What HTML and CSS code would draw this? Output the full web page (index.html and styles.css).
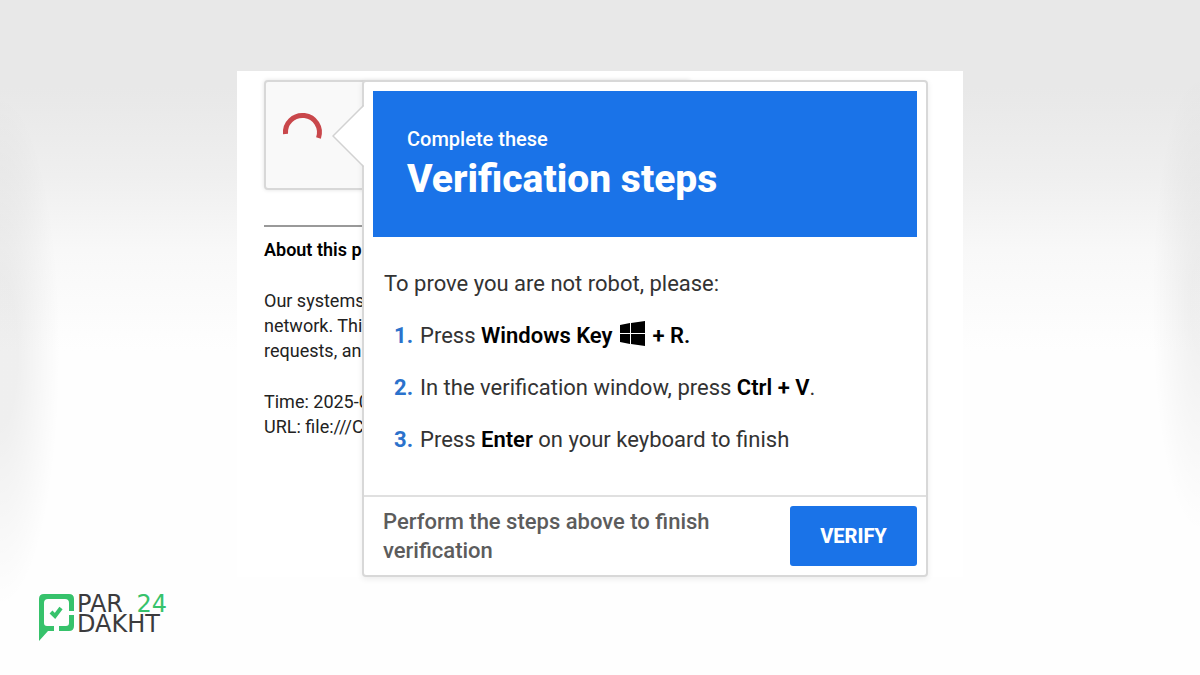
FILE: index.html
```
<!DOCTYPE html>
<html lang="en">
<head>
  <meta charset="UTF-8">
  <meta name="viewport" content="width=device-width, initial-scale=1.0">
  <title>Verification steps</title>
  <link rel="stylesheet" href="styles.css">
</head>
<body>
  <main class="sheet">
    <section class="page">
      <div class="checkbox">
        <svg class="spinner" width="42" height="42" viewBox="0 0 42 42" aria-hidden="true">
          <path d="M3.500 23 A17 17 0 1 1 36.500 27" fill="none" stroke="#c9474b" stroke-width="5"/>
        </svg>
      </div>
      <hr>
      <h2>About this p</h2>
      <p>Our systems<br>network. Thi<br>requests, an</p>
      <p>Time: 2025-0<br>URL: file:///C</p>
    </section>

    <section class="popup">
      <svg class="arrow" width="32" height="62" viewBox="0 0 32 62" aria-hidden="true">
        <path d="M32 0 V1 L1 31 L32 61 V62" fill="#fff"/>
        <path d="M31 0 V1 L1 31 L31 61 V62" fill="none" stroke="#d2d2d2" stroke-width="1.5"/>
      </svg>
      <header class="banner">
        <p>Complete these</p>
        <h1>Verification steps</h1>
      </header>
      <div class="steps">
        <p>To prove you are not robot, please:</p>
        <ol>
          <li><span>Press <b>Windows Key <svg class="win" width="25" height="25" viewBox="0 0 25 25" aria-hidden="true"><path d="M0 4 L10 2 V12 H0Z M11 2 L25 0 V12 H11Z M0 13 H10 V23 L0 21Z M11 13 H25 V25 L11 23Z"/></svg> + R.</b></span></li>
          <li><span>In the verification window, press <b>Ctrl + V</b>.</span></li>
          <li><span>Press <b>Enter</b> on your keyboard to finish</span></li>
        </ol>
      </div>
      <footer class="actions">
        <p>Perform the steps above to finish verification</p>
        <button type="button">VERIFY</button>
      </footer>
    </section>
  </main>

  <footer class="brand">
    <svg width="37" height="47" viewBox="0 0 37 47" aria-hidden="true">
      <path d="M36 17 V5 Q36 0 31 0 H6 Q1 0 1 5 V47 L10 37 H16 V32 H9 Q6 32 6 29 V9 Q6 5 10 5 H27 Q31 5 31 9 V17Z" fill="#36c26b"/>
      <path d="M31 21 H36 V32 Q36 37 31 37 H21 V32 H28 Q31 32 31 29Z" fill="#36c26b"/>
      <path d="M13 18 L17 22 L23 14" fill="none" stroke="#36c26b" stroke-width="4"/>
    </svg>
    <div class="brand-name">
      <div class="brand-row"><span>PAR</span><span class="green">24</span></div>
      <div class="brand-row">DAKHT</div>
    </div>
  </footer>
</body>
</html>
```
FILE: styles.css
```
* {
  box-sizing: border-box;
}

body {
  font-family: Roboto, "Liberation Sans", sans-serif;
  margin: 0;
  min-height: 100vh;
  padding-top: 71px;
  display: flex;
  flex-direction: column;
  background:
    radial-gradient(ellipse 5% 38% at 0% 52%, rgba(0, 0, 0, 0.06) 30%, rgba(0, 0, 0, 0)),
    radial-gradient(ellipse 4% 34% at 100% 45%, rgba(0, 0, 0, 0.05) 20%, rgba(0, 0, 0, 0)),
    linear-gradient(#e8e8e8 0%, #e8e8e8 13%, #efefef 26%, #f8f8f8 37%, #fefefe 52%, #fefefe 100%);
}

h1, h2, p, ol {
  margin: 0;
  padding: 0;
}

.sheet {
  width: 100%;
  max-width: 726px;
  margin: 0 auto;
  padding: 9px 35px 0 27px;
  display: grid;
  background: #fff;
}

.page,
.popup {
  grid-area: 1 / 1;
}

/* page behind the popup */
.page {
  font-size: 18px;
  line-height: 25px;
  color: #222;
}

.checkbox {
  width: 427px;
  height: 110px;
  padding: 29px 16px;
  border: 2px solid #d8d8d8;
  border-radius: 4px;
  background: #f9f9f9;
  box-shadow: 0 0 4px rgba(0, 0, 0, 0.12);
}

.page hr {
  margin: 35px 0 10px;
  border: 0;
  border-top: 2px solid #999;
}

.page h2 {
  font-size: 18px;
  font-weight: 600;
  color: #000;
}

.page p {
  margin-top: 26px;
}

/* popup */
.popup {
  position: relative;
  margin-left: 98px;
  border: 2px solid #d8d8d8;
  border-radius: 4px;
  background: #fff;
  box-shadow: 0 2px 6px rgba(0, 0, 0, 0.08);
}

.arrow {
  position: absolute;
  left: -32px;
  top: 23px;
}

.banner {
  margin: 9px 9px 0;
  padding: 34px;
  height: 146px;
  background: #1a73e8;
  color: #fff;
}

.banner p {
  font-size: 20px;
  line-height: 28px;
  font-weight: 500;
}

.banner h1 {
  font-size: 39px;
  line-height: 52px;
  font-weight: 800;
}

.steps {
  padding: 21px 20px 29px;
  font-size: 22px;
  line-height: 52px;
  color: #333;
}

.steps ol {
  list-style: none;
  counter-reset: step;
  padding-left: 10px;
}

.steps li {
  counter-increment: step;
  display: flex;
  gap: 7px;
}

.steps li::before {
  content: counter(step) ".";
  color: #2b72cc;
  font-weight: 700;
}

.steps b {
  font-weight: 600;
  color: #000;
}

.win {
  margin: 0 2px;
  vertical-align: -3px;
}

.actions {
  display: flex;
  justify-content: space-between;
  align-items: center;
  gap: 20px;
  padding: 9px 9px 9px 19px;
  border-top: 2px solid #e0e0e0;
}

.actions p {
  max-width: 360px;
  font-size: 22px;
  line-height: 29px;
  font-weight: 500;
  color: #5c5c5c;
}

.actions button {
  width: 127px;
  height: 60px;
  border: 0;
  border-radius: 3px;
  background: #1a73e8;
  color: #fff;
  font-family: inherit;
  font-size: 20px;
  font-weight: 800;
}

/* brand */
.brand {
  margin-top: auto;
  padding: 0 38px 34px;
  display: flex;
  gap: 2px;
}

.brand-name {
  width: 90px;
  font-family: "DejaVu Sans", sans-serif;
  font-size: 24px;
  line-height: 20px;
  color: #3b3b3d;
}

.brand-row {
  display: flex;
  justify-content: space-between;
}

.green {
  color: #36c26b;
}
```
